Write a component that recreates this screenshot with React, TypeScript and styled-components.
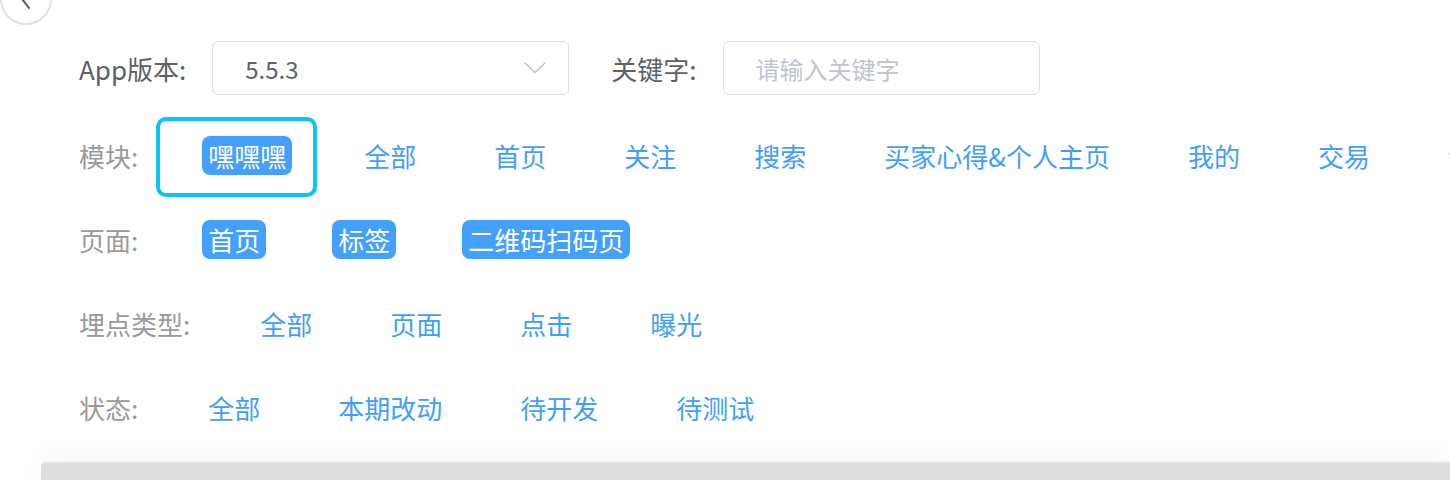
import React from "react";
import styled, { createGlobalStyle } from "styled-components";

const GlobalStyle = createGlobalStyle`
  html, body {
    margin: 0;
    padding: 0;
    background: #ffffff;
    overflow: hidden;
  }
  body {
    font-family: "Noto Sans CJK SC", "Noto Sans", sans-serif;
  }
`;

const Page = styled.div`
  position: relative;
  width: 1450px;
  height: 480px;
  overflow: hidden;
  background: #fff;
`;

const BackButton = styled.div`
  position: absolute;
  left: 0;
  top: -27px;
  width: 48px;
  height: 48px;
  border: 2px solid #dfe2e8;
  border-radius: 50%;
  display: flex;
  align-items: center;
  justify-content: center;
  background: #fff;
`;

const Filters = styled.div`
  padding: 41px 0 0 79px;
  display: flex;
  flex-direction: column;
`;

const TopRow = styled.div`
  display: flex;
  align-items: center;
  height: 54px;
`;

const FieldLabel = styled.span`
  font-size: 26px;
  color: #5f6064;
  white-space: nowrap;
  margin-right: 26px;
`;

const Field = styled.div<{ $w: number }>`
  box-sizing: border-box;
  width: ${(p) => p.$w}px;
  height: 54px;
  border: 1.5px solid #dcdfe6;
  border-radius: 6px;
  display: flex;
  align-items: center;
  justify-content: space-between;
  padding: 0 22px 0 32px;
  font-size: 24px;
  color: #606266;
  margin-right: 42px;
`;

const Placeholder = styled.span`
  color: #c0c4cc;
`;

const FilterRow = styled.div<{ $first?: boolean }>`
  display: flex;
  align-items: center;
  height: 84px;
  gap: 64px;
  margin-top: ${(p) => (p.$first ? "18px" : "0")};
  white-space: nowrap;
`;

const RowLabel = styled.span`
  font-size: 26px;
  color: #9a9a9a;
  flex: none;
`;

const Items = styled.div`
  display: flex;
  align-items: center;
  gap: 66px;
  flex: none;
`;

const Item = styled.span<{ $active?: boolean }>`
  position: relative;
  flex: none;
  box-sizing: border-box;
  height: 39px;
  line-height: 39px;
  padding: 0 6px;
  border-radius: 8px;
  font-size: 26px;
  color: ${(p) => (p.$active ? "#ffffff" : "#409eff")};
  background: ${(p) => (p.$active ? "#43a0fd" : "transparent")};
`;

const Highlight = styled.span`
  position: absolute;
  left: -46px;
  top: -19px;
  width: 161px;
  height: 80px;
  box-sizing: border-box;
  border: 4px solid #0bc3fb;
  border-radius: 10px;
  pointer-events: none;
`;

const Panel = styled.div`
  margin: 12px 0 0 41px;
  height: 60px;
  background: #dddddd;
  border-top: 2px solid #e9eef5;
  border-top-left-radius: 5px;
  box-shadow: 0 -8px 24px rgba(0, 0, 0, 0.03);
`;

type Row = { label: string; items: string[]; active?: number[]; ring?: number };

const rows: Row[] = [
  {
    label: "模块:",
    items: ["嘿嘿嘿", "全部", "首页", "关注", "搜索", "买家心得&个人主页", "我的", "交易", "订单"],
    active: [0],
    ring: 0,
  },
  { label: "页面:", items: ["首页", "标签", "二维码扫码页"], active: [0, 1, 2] },
  { label: "埋点类型:", items: ["全部", "页面", "点击", "曝光"] },
  { label: "状态:", items: ["全部", "本期改动", "待开发", "待测试"] },
];

export default function App() {
  return (
    <>
      <GlobalStyle />
      <Page>
        <BackButton>
          <svg width="14" height="22" viewBox="0 0 14 22" fill="none">
            <path d="M10 2 L3 11 L10 20" stroke="#555" strokeWidth="2" strokeLinecap="round" strokeLinejoin="round" />
          </svg>
        </BackButton>
        <Filters>
          <TopRow>
            <FieldLabel>App版本:</FieldLabel>
            <Field $w={357}>
              <span>5.5.3</span>
              <svg width="22" height="12" viewBox="0 0 22 12" fill="none">
                <path d="M1 1 L11 10.5 L21 1" stroke="#c0c4cc" strokeWidth="1.5" strokeLinecap="round" strokeLinejoin="round" />
              </svg>
            </Field>
            <FieldLabel>关键字:</FieldLabel>
            <Field $w={317}>
              <Placeholder>请输入关键字</Placeholder>
            </Field>
          </TopRow>
          {rows.map((row, ri) => (
            <FilterRow key={row.label} $first={ri === 0}>
              <RowLabel>{row.label}</RowLabel>
              <Items>
                {row.items.map((it, i) => (
                  <Item key={it + i} $active={row.active?.includes(i)}>
                    {it}
                    {row.ring === i && <Highlight />}
                  </Item>
                ))}
              </Items>
            </FilterRow>
          ))}
        </Filters>
        <Panel />
      </Page>
    </>
  );
}
